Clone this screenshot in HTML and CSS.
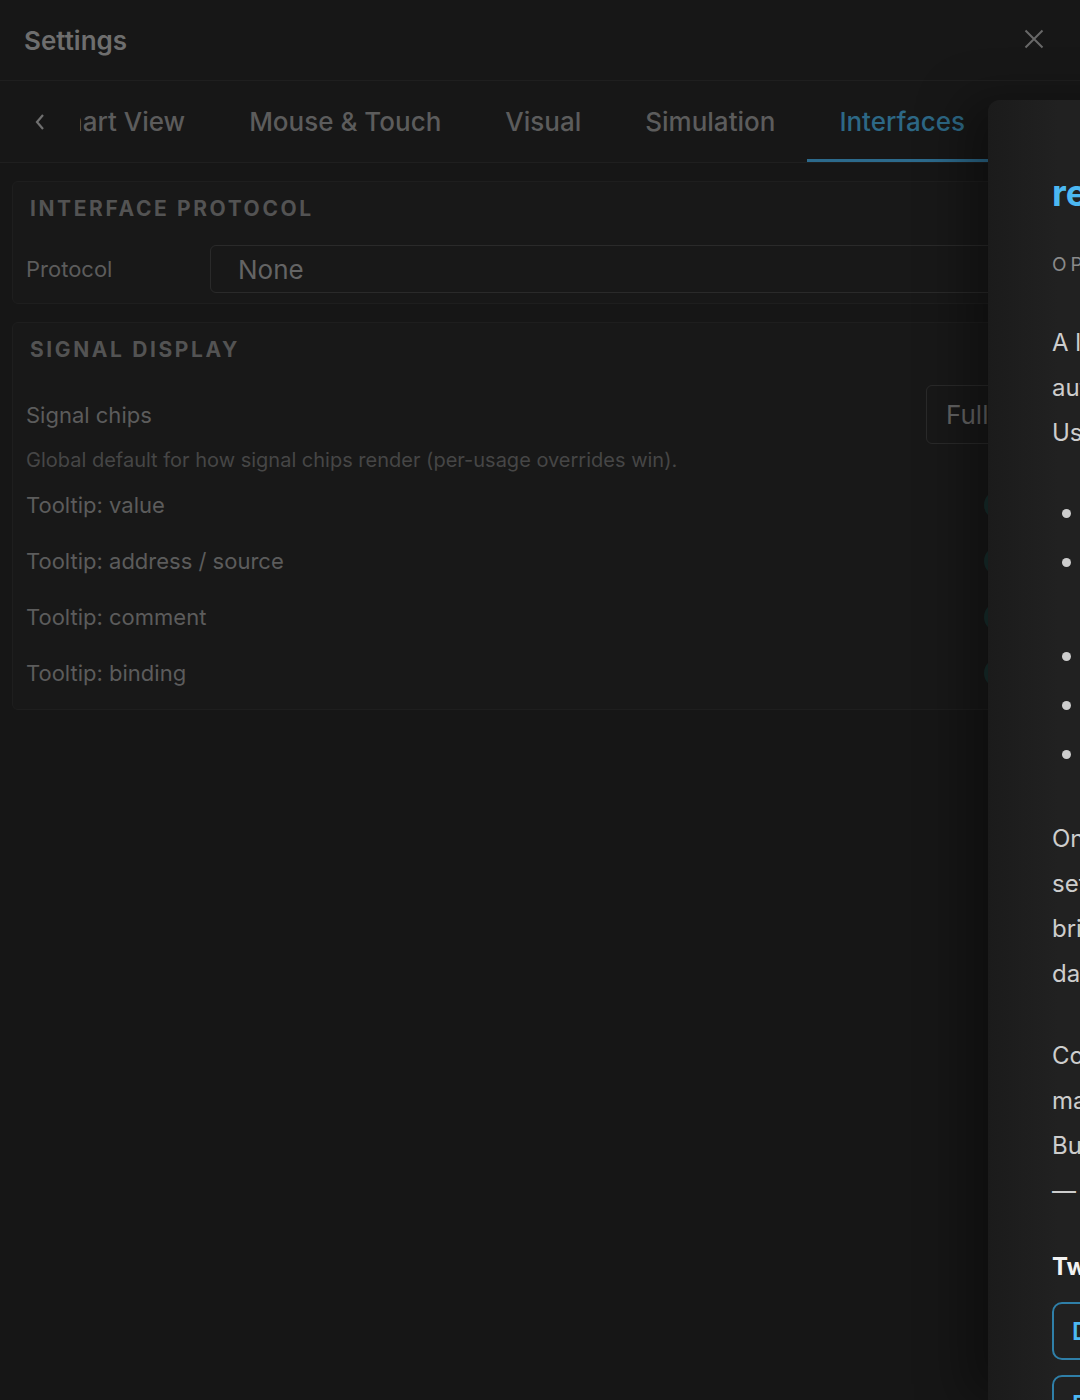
FILE: index.html
```html
<!DOCTYPE html>
<html lang="en">
<head>
    <meta charset="UTF-8">
    <meta name="viewport" content="width=device-width, initial-scale=1.0">
    <title>Settings</title>
    <link rel="stylesheet" href="styles.css">
</head>
<body>
    <div class="settings">
        <header class="settings-header">
            <h2>Settings</h2>
            <button class="close-btn" aria-label="Close">
                <svg width="20" height="20" viewBox="0 0 20 20"><path d="M1.5 1.5 L18.5 18.5 M18.5 1.5 L1.5 18.5" /></svg>
            </button>
        </header>

        <nav class="tab-bar">
            <button class="tab-arrow" aria-label="Previous">
                <svg width="12" height="18" viewBox="0 0 12 18"><path d="M9 2 L3 9 L9 16" /></svg>
            </button>
            <div class="tab-viewport">
                <div class="tab-strip">
                    <span class="tab">Chart View</span>
                    <span class="tab">Mouse &amp; Touch</span>
                    <span class="tab">Visual</span>
                    <span class="tab">Simulation</span>
                    <span class="tab active">Interfaces</span>
                </div>
            </div>
        </nav>

        <main class="settings-body">
            <section class="card">
                <h4 class="card-title">Interface Protocol</h4>
                <div class="row row-select">
                    <label class="row-label">Protocol</label>
                    <div class="select">None</div>
                </div>
            </section>

            <section class="card">
                <h4 class="card-title">Signal Display</h4>
                <div class="row row-chips">
                    <label class="row-label">Signal chips</label>
                    <div class="select select-small">Full</div>
                </div>
                <p class="hint">Global default for how signal chips render (per-usage overrides win).</p>
                <div class="toggle-row">
                    <span>Tooltip: value</span>
                    <span class="toggle"></span>
                </div>
                <div class="toggle-row">
                    <span>Tooltip: address / source</span>
                    <span class="toggle"></span>
                </div>
                <div class="toggle-row">
                    <span>Tooltip: comment</span>
                    <span class="toggle"></span>
                </div>
                <div class="toggle-row">
                    <span>Tooltip: binding</span>
                    <span class="toggle"></span>
                </div>
            </section>
        </main>
    </div>

    <aside class="drawer">
        <h2 class="drawer-title">remote-io</h2>
        <div class="drawer-kicker">Optional protocol</div>

        <p>A lightweight bridge that lets the simulator talk to<br>
        automation hardware over the local network.<br>
        Use it when you need:</p>

        <ul class="drawer-list">
            <li>Live values mirrored to a PLC</li>
            <li>Signals written by an external controller<br>without polling the editor</li>
            <li>Tag browsing from HMI tools</li>
            <li>Diagnostics while commissioning</li>
            <li>Logging of every change</li>
        </ul>

        <p class="after-list">Once enabled, every signal gets an address and<br>
        settings can be reviewed in the Interfaces tab. The<br>
        bridge stays idle until a client connects, so no<br>
        data leaves the machine by default.</p>

        <p>Connection details are stored per project and<br>
        may be exported together with it.<br>
        But credentials never are<br>
        — see the security notes below.</p>

        <h3 class="drawer-sub">Two ways to connect</h3>
        <div class="option-box">Direct connection</div>
        <div class="option-box">Relay through a gateway</div>
    </aside>
</body>
</html>
```

FILE: styles.css
```css
* {
    box-sizing: border-box;
}

body {
    margin: 0;
    height: 1400px;
    overflow: hidden;
    background-color: #161616;
    font-family: Inter, "Noto Sans", sans-serif;
    position: relative;
}

button {
    background: none;
    border: none;
    padding: 0;
    cursor: pointer;
}

/* header */
.settings-header {
    height: 81px;
    display: flex;
    align-items: center;
    justify-content: space-between;
    padding: 0 36px 0 24px;
    background-color: #171717;
    border-bottom: 1px solid #1f1f1f;
}

.settings-header h2 {
    margin: 0;
    font-size: 26px;
    font-weight: 600;
    color: #6e6e6e;
}

.close-btn svg path {
    stroke: #686868;
    stroke-width: 2;
    fill: none;
}

/* tabs */
.tab-bar {
    height: 82px;
    display: flex;
    border-bottom: 1px solid #1f1f1f;
    background-color: #171717;
}

.tab-arrow {
    width: 80px;
    flex-shrink: 0;
    display: flex;
    align-items: center;
    justify-content: center;
}

.tab-arrow svg path {
    stroke: #707070;
    stroke-width: 2.2;
    fill: none;
}

.tab-viewport {
    flex: 1;
    overflow: hidden;
}

.tab-strip {
    display: flex;
    height: 100%;
    margin-left: -64px;
}

.tab {
    display: flex;
    align-items: center;
    padding: 3px 32px 0;
    font-size: 26px;
    font-weight: 500;
    color: #5c5c5c;
    white-space: nowrap;
    border-bottom: 3px solid transparent;
}

.tab.active {
    color: #2d6886;
    border-bottom-color: #2c6a8c;
}

/* body */
.settings-body {
    padding: 18px 12px;
}

.card {
    background-color: #181818;
    border: 1px solid #1e1e1e;
    border-radius: 6px;
    padding: 13px 13px 10px;
    margin-bottom: 18px;
}

.card-title {
    margin: 0;
    padding-left: 4px;
    font-size: 21px;
    line-height: 27px;
    font-weight: 700;
    letter-spacing: 2.6px;
    text-transform: uppercase;
    color: #535353;
}

.row {
    display: flex;
    align-items: center;
}

.row-select {
    margin-top: 23px;
}

.row-chips {
    margin-top: 22px;
    justify-content: space-between;
}

.row-label {
    width: 184px;
    font-size: 22px;
    color: #5c5c5c;
}

.select {
    flex: 1;
    height: 48px;
    display: flex;
    align-items: center;
    padding-left: 27px;
    border: 1px solid #2a2a2a;
    border-radius: 6px;
    font-size: 26px;
    color: #646464;
}

.select-small {
    flex: none;
    width: 128px;
    height: 59px;
    padding-left: 19px;
}

.hint {
    margin: 3px 0 6px;
    font-size: 20px;
    line-height: 26px;
    color: #464646;
}

.toggle-row {
    height: 52px;
    margin-bottom: 4px;
    display: flex;
    align-items: center;
    justify-content: space-between;
    font-size: 22px;
    color: #5c5c5c;
}

.toggle-row:last-child {
    margin-bottom: 0;
}

.toggle {
    width: 60px;
    height: 30px;
    margin-right: 10px;
    border-radius: 15px;
    background-color: #182f2e;
}

/* help drawer on top */
.drawer {
    position: absolute;
    top: 100px;
    left: 988px;
    width: 640px;
    bottom: 0;
    padding: 71px 40px 0 64px;
    border-top-left-radius: 12px;
    background: linear-gradient(to right, #1b1b1b, #212121 70px);
    box-shadow: -24px 0 48px rgba(0, 0, 0, 0.35);
    color: #cdcdcd;
    font-size: 24px;
    line-height: 45px;
    white-space: nowrap;
}

.drawer-title {
    margin: 0;
    font-size: 36px;
    line-height: 44px;
    font-weight: 700;
    color: #4cb8f2;
}

.drawer-kicker {
    margin-top: 38px;
    font-size: 19px;
    line-height: 24px;
    letter-spacing: 4px;
    text-transform: uppercase;
    color: #8a8a8a;
}

.drawer p {
    margin: 37px 0 0;
}

.drawer-kicker + p {
    margin-top: 43px;
}

.drawer p.after-list {
    margin-top: 39px;
}

.drawer-list {
    list-style: none;
    margin: 36px 0 0;
    padding: 0;
}

.drawer-list li {
    position: relative;
    padding-left: 40px;
    margin-bottom: 4px;
}

.drawer-list li:last-child {
    margin-bottom: 0;
}

.drawer-list li::before {
    content: "";
    position: absolute;
    left: 10px;
    top: 18px;
    width: 9px;
    height: 9px;
    border-radius: 50%;
    background-color: #cdcdcd;
}

.drawer-sub {
    margin: 38px 0 19px;
    font-size: 24px;
    line-height: 32px;
    font-weight: 700;
    color: #f2f2f2;
}

.option-box {
    height: 58px;
    margin-bottom: 15px;
    padding-left: 18px;
    display: flex;
    align-items: center;
    border: 2px solid #2f7fa8;
    border-radius: 10px;
    color: #4cb8f2;
    font-weight: 600;
}
```
